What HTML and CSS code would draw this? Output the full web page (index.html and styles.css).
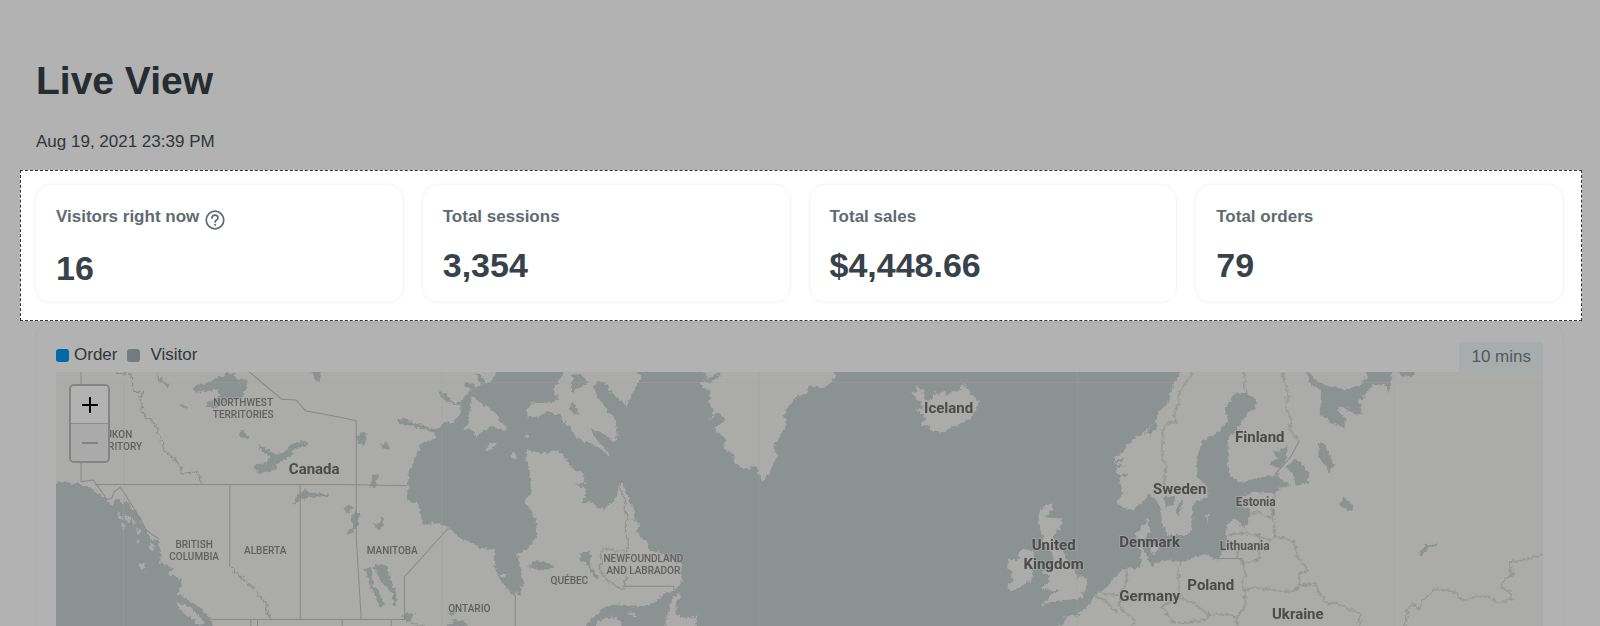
FILE: index.html
```html
<!DOCTYPE html>
<html lang="en">
<head>
<meta charset="utf-8">
<meta name="viewport" content="width=device-width, initial-scale=1">
<title>Live View</title>
<link rel="stylesheet" href="styles.css">
</head>
<body>
<main class="page">
  <header class="page-head">
    <h1 class="title">Live View</h1>
    <p class="date">Aug 19, 2021 23:39 PM</p>
  </header>

  <section class="stats" aria-label="Summary">
    <article class="card">
      <h2 class="card-label">Visitors right now
        <button class="help" type="button" aria-label="About visitors">
          <svg viewBox="0 0 20 20" width="20" height="20" fill="none" stroke="currentColor" stroke-width="1.7" stroke-linecap="round">
            <circle cx="10" cy="10" r="8.8"/>
            <path d="M7 8.1C7 6.300 8.200 5.200 10 5.200s3 1.100 3 2.700c0 2-2.900 2.200-2.900 4"/>
            <path d="M10.100 14.700v.1" stroke-width="2"/>
          </svg>
        </button>
      </h2>
      <p class="card-value">16</p>
    </article>
    <article class="card">
      <h2 class="card-label">Total sessions</h2>
      <p class="card-value">3,354</p>
    </article>
    <article class="card">
      <h2 class="card-label">Total sales</h2>
      <p class="card-value">$4,448.66</p>
    </article>
    <article class="card">
      <h2 class="card-label">Total orders</h2>
      <p class="card-value">79</p>
    </article>
  </section>

  <section class="panel" aria-label="Activity map">
    <div class="panel-bar">
      <ul class="legend">
        <li class="legend-item"><span class="swatch swatch-order"></span>Order</li>
        <li class="legend-item legend-visitor"><span class="swatch swatch-visitor"></span>Visitor</li>
      </ul>
      <button class="range" type="button">10 mins</button>
    </div>
    <div class="map">
      <svg class="map-canvas" viewBox="56 372 1486 254" role="img" aria-label="World map">
        <defs>
          <filter id="rough" x="0" y="0" width="100%" height="100%">
            <feTurbulence type="fractalNoise" baseFrequency="0.28" numOctaves="2" seed="4"/>
            <feDisplacementMap in="SourceGraphic" scale="6" xChannelSelector="R" yChannelSelector="G"/>
          </filter>
        </defs>
        <rect class="land" x="56" y="372" width="1486" height="254"/>
        <g filter="url(#rough)"><g transform="scale(.33333)">
          <g transform="translate(120 990)">
            <path class="water" d="M30 458L70 455 90 462 118 458 125 465 150 472 165 485 185 500 205 515 218 528 228 505 240 510 250 520 262 508 268 530 285 540 300 565 310 590 318 600 330 625 355 635 362 665 360 700 385 705 395 715 388 735 420 745 425 765 412 790 440 805 460 820 475 825 490 845 510 860 520 900 30 900Z"/>
            <path class="land" d="M295 700L318 700 315 715 302 720ZM405 815L440 825 470 850 490 875 480 888 455 865 430 850ZM232 545l10 8 4 18-10-8ZM255 550l14 12-4 16-10-12ZM275 560l12 18-8 8ZM245 575l10 12-4 12-8-10ZM288 590l12 14-8 10ZM290 625l10 12-6 4ZM330 635l14 14-6 18-10-16ZM312 720l6 10-4 4Z"/>
            <path class="water" d="M458 175L470 165 500 160 530 145 570 126 590 138 592 150 620 148 620 175 605 205 560 215 530 235 495 230 505 215 540 200 530 180 500 182 470 188ZM650 340L675 355 705 372 730 368 755 340 800 335 803 345 770 355 745 380 715 400 695 425 660 430 638 410 650 402 680 400 688 380 665 362ZM595 315L605 302 628 320 620 328ZM415 216L442 230 440 238 425 230ZM348 122L358 145 388 166 382 171 355 152ZM810 122L845 122 838 140 840 162 825 145ZM755 520L775 490 795 478 810 488 868 490 865 499 815 500 780 508 765 523Z"/>
          </g>
          <g transform="translate(1020 1080)">
            <path class="water" d="M475 20L455 60 440 75 430 60 415 38 405 42 425 75 410 80 375 65 372 75 395 88 380 105 360 130 335 125 320 105 295 95 300 108 330 130 365 135 360 160 340 185 305 190 295 208 270 205 230 190 190 176 170 180 175 190 230 202 285 220 285 235 245 250 225 290 205 345 200 420 235 430 248 495 285 488 325 503 345 520 370 540 420 563 462 568 468 640 485 665 505 695 520 708 528 690 538 708 548 670 540 620 530 582 560 568 588 530 588 480 575 455 553 425 572 395 568 330 555 290 560 270 610 280 650 268 680 300 695 325 730 340 735 368 705 371 705 376 735 380 735 405 725 430 755 425 780 450 800 440 830 410 835 375 845 365 860 400 870 430 890 460 900 490 960 490 960 20Z"/>
            <path class="land" d="M395 105L415 125 440 140 470 165 475 185 500 200 495 213 470 208 455 195 435 210 405 232 398 208 368 210 385 190 388 150ZM435 268L450 250 470 248 462 262 440 277ZM515 278L525 275 525 297 515 292ZM555 223l8 2-2 8-6-4ZM680 20L655 65 640 85 655 120 625 130 590 128 575 127 558 150 562 170 590 172 620 155 640 165 660 165 670 185 695 210 710 235 760 255 808 287 800 270 770 240 748 205 780 215 825 245 832 225 825 180 800 150 770 110 760 80 770 60 800 70 810 95 850 125 860 110 874 88 905 60 905 20ZM478 642l18 0-2 10-14-3Z"/>
            <path class="water" d="M48 235L60 218 80 217 72 258 55 250ZM122 258L135 245 152 268 130 265ZM90 378L100 345 115 340 108 365 105 385ZM10 445L30 430 38 440 20 460ZM35 465L60 452 55 490 40 515 20 525 22 510 35 505ZM100 490L118 490 122 468 132 475 130 492 112 512ZM100 620L120 610 140 620 150 660 165 690 172 720 160 735 155 700 135 680 115 650ZM72 625L95 622 97 655 100 680 115 690 135 735 120 738 95 688 85 660ZM562 620L590 600 640 615 640 622 600 628 580 625ZM720 580L745 575 755 595 745 605 775 655 765 658 740 610 720 600ZM320 800L340 780 370 782 385 800ZM190 770L200 755 222 762 215 778 195 785ZM322 758l14-10 12 10-14 8ZM695 45L715 40 745 65 725 80 705 90 695 105ZM685 145L695 125 718 160 705 165ZM835 36L870 36 890 50 870 55Z"/>
          </g>
          <g transform="translate(1800 1080)">
            <path class="water" d="M100 20H2240V820H-60L-45 798-15 765 25 735 60 733 125 738 165 725 190 700 225 690 245 665 240 640 245 610 200 600 185 580 145 570 145 550 120 530 108 510 120 495 100 480Z"/>
            <path class="land" d="M90 20L125 50 100 90 80 137 60 120 50 100 30 90 50 70 60 20ZM240 695L225 740 230 765 260 775 290 768 285 820H190L200 765 215 720ZM72 752L95 758 118 773 95 768ZM-10 785L30 772 55 775 70 820H-20ZM285 20L325 50 300 70 310 85 330 95 325 120 335 150 330 180 350 155 375 180 345 200 350 215 375 235 370 265 395 280 405 310 430 330 465 318 475 340 485 365 500 350 515 320 530 290 520 260 540 225 560 190 550 165 565 135 590 110 620 100 625 75 660 85 695 68 712 20Z"/>
            <path class="water" d="M305 66L345 42 362 45 330 68ZM340 172l14-12 12 14-12 12Z"/>
          </g>
          <g transform="translate(2640 1080)">
            <path class="land" d="M95 100L110 95 105 75 125 90 130 115 145 125 160 110 162 95 175 108 190 90 203 108 215 92 240 90 245 70 270 95 275 110 295 122 288 150 270 175 240 190 210 205 185 218 155 210 140 195 118 197 135 180 130 165 105 150 130 145 120 130ZM485 440L520 432 510 455 495 472 545 475 540 500 520 525 520 545 545 570 560 600 585 640 590 655 605 647 620 660 615 690 600 700 612 710 580 718 540 720 510 725 480 738 505 712 515 700 540 690 510 690 480 685 505 665 500 640 480 635 510 620 520 600 515 580 500 560 480 550 490 530 480 510 470 470ZM415 575L430 565 460 575 460 610 455 650 445 665 395 692 375 682 400 660 385 650 400 635 380 625 385 600 415 600Z"/>
          </g>
          <g transform="translate(3240 1080)">
            <path class="land" d="M305 20L285 60 270 90 262 130 240 150 225 180 205 200 185 225 160 235 135 260 120 285 100 290 105 310 130 320 105 325 115 345 120 370 125 395 108 430 150 452 190 425 205 400 225 415 240 450 245 490 262 520 262 535 300 610 265 600 235 605 210 620 185 612 180 625 140 622 125 632 100 650 85 675 65 695 40 705 25 735-10 765-50 770-45 760-50 790-115 820H1400V20ZM205 476L190 490 165 520 170 545 180 575 180 612 215 622 200 590 190 570 195 550 190 530 215 518 205 505ZM210 560l20-8 4 18-10 12-14-4Z"/>
            <path class="water" d="M460 98L500 100 528 120 520 150 500 160 480 195 450 225 440 245 445 340 475 370 520 355 595 343 600 360 630 375 600 382 580 400 520 395 480 410 475 440 508 445 505 490 485 500 460 475 440 490 435 520 435 560 410 600 375 583 340 590 300 612 262 535 265 525 325 525 335 480 335 430 380 410 380 380 350 350 348 290 365 245 410 215 440 185 432 150 445 125ZM250 415L285 405 280 430 255 440ZM300 420L308 425 290 468 286 455ZM640 297L665 310 685 340 680 370 645 377 640 350 618 320ZM715 245L735 255 745 285 762 315 745 338 735 320 712 290ZM575 270L590 275 620 258 618 290 600 325 562 312 590 295ZM770 425L778 430 790 410 815 440 808 453 790 445ZM570 440L583 455 575 465ZM195 220L225 180 230 200 208 225ZM105 300l30-5 0 4-28 8ZM110 345l32-5 0 4-28 8ZM675 20L700 60 740 78 790 88 830 80 858 50 862 20H932L930 80 922 100 915 75 880 72 835 125 845 160 830 168 785 140 770 145 795 180 790 205 755 190 720 165 720 90 685 70ZM952 20H1000V44L990 50 960 48ZM1010 587L1032 555 1070 549 1068 558 1040 565 1020 588Z"/>
            <path class="land" d="M375 463L385 466 378 491Z"/>
          </g>
        </g></g>
        <g class="borders" transform="scale(.33333)">
          <path transform="translate(120 990)" d="M123 120V455L160 450 170 465 195 500 200 508 215 505 222 485 240 472 250 485 275 525 300 565 318 600 358 628M165 463H900M569 463V710M780 463V868M515 868H900M632 868V888M652 868V888M620 120L725 208 768 210 795 242 900 262"/>
          <path transform="translate(1020 1080)" d="M0 172L48 182V530L63 778M0 373L200 377M325 503L193 650V778H0M6 778V798M153 778V798M525 705V798M855 678H1000V690"/>
          <path transform="translate(3240 1080)" d="M410 595H485M655 243L630 290 582 343"/>
        </g>
        <g filter="url(#rough)"><g class="borders" transform="scale(.33333)">
          <path transform="translate(120 990)" d="M569 710L590 730 612 750 640 775 678 822 682 850 692 866M225 120L228 131H272L275 150 282 183 308 187 300 210 308 230 300 240 320 263 335 268 352 300 362 330 375 365 395 380 420 405 425 430 470 425 475 440 488 463"/>
          <path transform="translate(1020 1080)" d="M193 778L215 788 250 798M838 360L840 385 855 420 850 450 860 465 855 510 865 560 855 575 820 570 790 565 780 580 785 600 775 625 800 660 845 690 855 680 850 660 865 652"/>
          <path transform="translate(3240 1080)" d="M335 36L315 70 297 90 292 130 278 165 287 187 260 190 245 210 245 300 258 318 250 345 253 390M487 36L495 60 488 75 500 102M605 36L610 65 622 100 615 140 632 185 625 207 655 243M583 400L570 430 578 475 560 470 530 455 508 460M578 475L583 530 570 542 545 530 520 522 480 520 440 525M583 530L615 535 640 545 650 590 682 630 655 640 655 675M545 530L535 560 535 590 530 600 490 610 470 595 470 570M485 595L495 650 482 665 490 690 495 735 465 775 470 798M490 690L520 680 580 690 635 695 655 675 705 670 715 700 740 730 770 728 800 745 838 760 835 798M290 615L298 700 305 715 340 730 385 765 425 762 465 768M385 765L370 780 310 788 275 785 245 735 300 712M140 630L135 670 120 700 115 740 160 780 155 798M40 705L75 720 95 745 115 760M65 700L115 705"/>
          <path transform="translate(3900 990)" d="M312 888L318 855 320 835 335 822 345 828 355 840 360 815 380 798 400 778 440 780 465 788 485 812 500 808 520 800 565 800 590 818 630 808 632 790 600 770 615 745 640 730 622 718 630 704 622 697 660 692 695 682 727 672"/>
        </g></g>
        <path class="tiles" d="M123.500 372V626M441.500 372V626M758.500 372V626M1076.500 372V626M1393.500 372V626M56 382.500H1542"/>
        <g class="region">
          <text x="243" y="406">NORTHWEST</text><text x="243" y="418">TERRITORIES</text>
          <text x="116" y="438">YUKON</text><text x="116" y="450">TERRITORY</text>
          <text x="194" y="548">BRITISH</text><text x="194" y="560">COLUMBIA</text>
          <text x="265" y="554">ALBERTA</text><text x="392" y="554">MANITOBA</text>
          <text x="469" y="612">ONTARIO</text><text x="569" y="584">QUÉBEC</text>
          <text x="643" y="562">NEWFOUNDLAND</text><text x="643" y="574">AND LABRADOR</text>
        </g>
        <g class="country">
          <text x="314" y="474">Canada</text><text x="948" y="413">Iceland</text>
          <text x="1053" y="550">United</text><text x="1053" y="569">Kingdom</text>
          <text x="1149" y="547">Denmark</text><text x="1179" y="494">Sweden</text>
          <text x="1149" y="601">Germany</text><text x="1259" y="442">Finland</text>
          <text x="1210" y="590">Poland</text><text x="1297" y="619">Ukraine</text>
        </g>
        <g class="country country-small">
          <text x="1255" y="506">Estonia</text><text x="1244" y="550">Lithuania</text>
        </g>
      </svg>
      <div class="zoom">
        <button class="zoom-btn" type="button" aria-label="Zoom in">
          <svg viewBox="0 0 16 16" width="16" height="16" stroke="currentColor" stroke-width="2"><path d="M0 8H16M8 0V16"/></svg>
        </button>
        <button class="zoom-btn zoom-out" type="button" aria-label="Zoom out" disabled>
          <svg viewBox="0 0 16 16" width="16" height="16" stroke="currentColor" stroke-width="2"><path d="M0 8H16"/></svg>
        </button>
      </div>
    </div>
  </section>
</main>
</body>
</html>
```
FILE: styles.css
```css
* {
  box-sizing: border-box;
}

body {
  margin: 0;
  background: #b2b2b2;
  color: #303637;
  font: 17px/20px "Liberation Sans", Arial, sans-serif;
}

h1, h2, p, ul {
  margin: 0;
  padding: 0;
}

button {
  font: inherit;
  border: 0;
  padding: 0;
  cursor: pointer;
}

.page {
  padding: 59px 18px 0 20px;
}

.page-head {
  padding: 0 16px 18px;
}

.title {
  color: #252d30;
  font-size: 39px;
  line-height: 44px;
}

.date {
  margin-top: 29px;
}

.stats {
  display: grid;
  grid-template-columns: repeat(4, 1fr);
  gap: 18px;
  padding: 13px 17px 17px 14px;
  border: 1px dashed #333;
  background: #fff;
}

.card {
  padding: 22px 20px 15px;
  border: 1px solid #f6f6f6;
  border-radius: 16px;
  box-shadow: 0 0 2px #f3f3f3;
}

.card-label {
  display: flex;
  align-items: flex-start;
  gap: 6px;
  color: #5f6b70;
  font-size: 17px;
  line-height: 20px;
}

.help {
  display: flex;
  padding-top: 3px;
  background: none;
  color: #5f6b70;
}

.card-value {
  margin-top: 19px;
  color: #37424a;
  font-size: 34px;
  font-weight: bold;
  line-height: 38px;
}

.panel {
  margin: 1px 18px 0 15px;
  padding: 19px 20px 0;
  border: 1px solid #aeaeae;
  border-bottom: 0;
  border-radius: 16px 16px 0 0;
}

.panel-bar {
  display: flex;
  justify-content: space-between;
  align-items: flex-start;
}

.legend {
  display: flex;
  gap: 10px;
  padding-top: 3px;
  list-style: none;
}

.legend-item {
  display: flex;
  align-items: center;
  gap: 5px;
}

.legend-visitor {
  gap: 10px;
}

.swatch {
  width: 13px;
  height: 13px;
  border-radius: 3px;
}

.swatch-order {
  background: #0069a8;
}

.swatch-visitor {
  background: #757c80;
}

.range {
  padding: 5px 12px;
  border-radius: 4px 4px 0 0;
  background: #a8acac;
  color: #4f5a5f;
}

.map {
  position: relative;
}

.map-canvas {
  display: block;
  width: 100%;
}

.land {
  fill: #ababa9;
}

.water {
  fill: #8c9291;
}

.borders {
  fill: none;
  stroke: #888887;
  stroke-width: 3;
  stroke-linejoin: round;
}

.tiles {
  fill: none;
  stroke: #a0a3a2;
  stroke-opacity: .35;
}

.region,
.country {
  font-family: Roboto, "Liberation Sans", sans-serif;
  font-weight: 500;
  text-anchor: middle;
  paint-order: stroke;
  stroke: #ababa9;
  stroke-opacity: .5;
  stroke-width: 2;
}

.region {
  fill: #606060;
  font-size: 10px;
}

.country {
  fill: #4b4b4b;
  font-size: 15px;
  font-weight: bold;
}

.country-small {
  fill: #555;
  font-size: 12px;
}

.zoom {
  position: absolute;
  top: 12px;
  left: 13px;
  width: 41px;
  border: 2px solid #848483;
  border-radius: 5px;
  overflow: hidden;
}

.zoom-btn {
  display: flex;
  align-items: center;
  justify-content: center;
  width: 100%;
  height: 37px;
  background: #b2b2b2;
  color: #000;
}

.zoom-out {
  height: 38px;
  border-top: 1px solid #8f8f8f;
  background: #aaa;
  color: #828282;
}
```
